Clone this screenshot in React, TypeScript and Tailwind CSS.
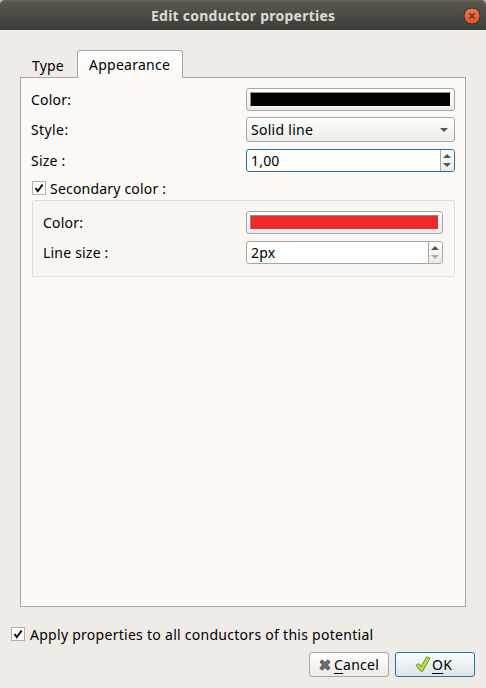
import React from "react";

function Check() {
  return (
    <span className="block h-[14px] w-[14px] shrink-0 border border-[#b2aeaa] bg-white">
      <svg viewBox="0 0 12 12" className="block h-3 w-3" fill="none" stroke="#000">
        <path d="M2.6 6 L4.8 9.2 L9.6 2.6" strokeWidth="1.9" />
      </svg>
    </span>
  );
}

function Swatch({ fill }: { fill: string }) {
  return (
    <div className="h-[23px] rounded-[3px] border border-[#a8a5a2] bg-linear-to-b from-white to-[#ecebe9] p-[3px]">
      <div className="h-[15px] border border-t-[#8f8d8b] border-r-white border-b-white border-l-[#8f8d8b]">
        <div className={`h-[13px] ${fill}`} />
      </div>
    </div>
  );
}

function Spin({ value, focused, atMinimum }: { value: string; focused?: boolean; atMinimum?: boolean }) {
  return (
    <div className={`flex h-[23px] overflow-hidden rounded-[3px] border bg-white ${focused ? "border-[#2b6f9e]" : "border-[#a8a5a2]"}`}>
      <div className="flex-1 pl-1 leading-[21px]">{value}</div>
      <div className="flex w-[14px] flex-col items-start justify-center gap-[5px] border-l border-[#a8a5a2] bg-linear-to-b from-white to-[#ecebe9] pl-[2px]">
        <svg className="block h-1 w-2" viewBox="0 0 8 4"><path d="M4 0 L8 4 H0 Z" fill="#555" /></svg>
        <svg className="block h-1 w-2" viewBox="0 0 8 4"><path d="M0 0 H8 L4 4 Z" fill={atMinimum ? "#aaa" : "#555"} /></svg>
      </div>
    </div>
  );
}

export default function App() {
  return (
    <div className="flex h-[688px] w-[486px] flex-col overflow-hidden bg-[#efebe7] font-['Noto_Sans',sans-serif] text-[14px] tracking-[0.2px] whitespace-nowrap text-black">
      <div className="shrink-0 bg-[#b9b6b2]">
        <header className="flex h-[30px] items-center rounded-t-[5px] border-t border-[#66635b] bg-linear-to-b from-[#5a5850] to-[#3e3c37] pr-[5px]">
          <h1 className="flex-1 pl-[151px] text-[14px] leading-[28px] font-bold tracking-[0.24px] text-[#dfdbd2]">Edit conductor properties</h1>
          <svg className="h-[18px] w-[18px]" viewBox="0 0 18 18">
            <defs><linearGradient id="close" x2="0" y2="1"><stop stopColor="#f37750" /><stop offset="1" stopColor="#e65322" /></linearGradient></defs>
            <circle cx="9" cy="9" r="8" fill="url(#close)" stroke="#34322e" />
            <path d="M6.3 6.3 L11.7 11.7 M11.7 6.3 L6.3 11.7" stroke="#42372c" strokeWidth="1.3" />
          </svg>
        </header>
      </div>

      <nav className="z-10 mt-5 -mb-px flex h-[28px] shrink-0 pl-[20px]">
        <div className="w-[57px] pt-[6px] pl-3 leading-5">Type</div>
        <div className="w-[106px] rounded-t-[3px] border border-b-0 border-[#a8a5a2] bg-linear-to-b from-white to-[#fdf9f6] pt-[4px] pl-[11px] leading-5 tracking-[0.26px]">Appearance</div>
      </nav>

      <main className="mx-5 flex h-[530px] shrink-0 flex-col border border-[#a8a5a2] bg-[#fdf9f6] px-[10px] pt-[10px]">
        <div className="flex h-[29px]">
          <span className="w-[215px] leading-[23px]">Color:</span>
          <div className="w-[209px]"><Swatch fill="bg-black" /></div>
        </div>
        <div className="flex h-[32px]">
          <span className="w-[215px] leading-[25px] tracking-[0.4px]">Style:</span>
          <div className="flex h-[25px] w-[209px] items-center justify-between rounded-[3px] border border-[#a8a5a2] bg-linear-to-b from-white to-[#ecebe9] pr-[6px] pl-1">
            <span className="tracking-[0.27px]">Solid line</span>
            <svg className="h-1 w-2" viewBox="0 0 8 4"><path d="M0 0 H8 L4 4 Z" fill="#555" /></svg>
          </div>
        </div>
        <div className="flex h-[32px]">
          <span className="w-[215px] leading-[23px]">Size :</span>
          <div className="w-[209px]"><Spin value="1,00" focused /></div>
        </div>
        <div className="flex h-[19px] gap-1 pl-px">
          <Check />
          <span className="leading-[15px]">Secondary color :</span>
        </div>
        <section className="ml-px h-[77px] w-[423px] rounded-[2px] border border-[#dfdcd9] bg-[#faf6f3] pt-[10px] pl-[10px]">
          <div className="flex h-[30px]">
            <span className="w-[203px] leading-[23px]">Color:</span>
            <div className="w-[197px]"><Swatch fill="bg-[#ef2929]" /></div>
          </div>
          <div className="flex">
            <span className="w-[203px] leading-[23px]">Line size :</span>
            <div className="w-[197px]"><Spin value="2px" atMinimum /></div>
          </div>
        </section>
      </main>

      <label className="mt-5 flex h-[25px] shrink-0 gap-[5px] pl-[11px]">
        <Check />
        <span className="leading-[15px] tracking-[0.275px]">Apply properties to all conductors of this potential</span>
      </label>

      <footer className="flex justify-end gap-[6px] pr-[11px]">
        <button className="flex h-[25px] w-[80px] items-center rounded-[3px] border border-[#a8a5a2] bg-linear-to-b from-white to-[#ecebe9] pl-[9px]">
          <svg className="h-3 w-3" viewBox="0 0 12 12"><path d="M1 3 L3 .8 L6 3.4 L9 .8 L11.2 3 L8.5 6 L11.2 9 L9 11.2 L6 8.6 L3 11.2 L.8 9 L3.5 6 Z" fill="#6b6b6b" stroke="#4d4d4d" strokeWidth=".9" /></svg>
          <span className="ml-[3px] tracking-[0.25px]"><u className="underline-offset-[3px]">C</u>ancel</span>
        </button>
        <button className="flex h-[25px] w-[80px] items-center rounded-[3px] border border-[#2b6f9e] bg-linear-to-b from-[#fcfdfe] to-[#dfe4e8] pl-[19px]">
          <svg className="mb-[2px] h-4 w-4" viewBox="0 0 16 16"><path d="M1 9.3 L3.7 7.5 L6.2 10.4 L11.6 .8 L15 2 L7.7 15.2 H5.7 Z" fill="#b7d94c" stroke="#6c9522" strokeWidth="1" strokeLinejoin="round" /></svg>
          <span className="ml-px tracking-[0.4px]"><u className="underline-offset-[3px]">O</u>K</span>
        </button>
      </footer>
    </div>
  );
}
